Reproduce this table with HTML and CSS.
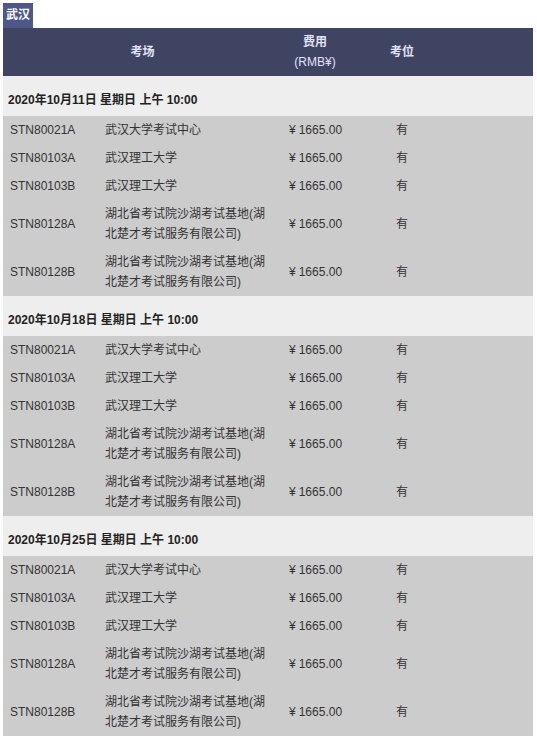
FILE: index.html
```html
<!DOCTYPE html>
<html lang="zh">
<head>
<meta charset="utf-8">
<link rel="stylesheet" href="styles.css">
</head>
<body>
<div class="wrap">
  <div class="city">武汉</div>
  <div class="head">
    <div class="h-venue">考场</div>
    <div class="h-fee">费用<br><span class="unit">(RMB¥)</span></div>
    <div class="h-seat">考位</div>
  </div>

  <div class="date">2020年10月11日 星期日 上午 10:00</div>
  <div class="rows">
    <div class="row"><div class="c1">STN80021A</div><div class="c2">武汉大学考试中心</div><div class="c3"><span class="yen">¥</span>1665.00</div><div class="c4">有</div></div>
    <div class="row"><div class="c1">STN80103A</div><div class="c2">武汉理工大学</div><div class="c3"><span class="yen">¥</span>1665.00</div><div class="c4">有</div></div>
    <div class="row"><div class="c1">STN80103B</div><div class="c2">武汉理工大学</div><div class="c3"><span class="yen">¥</span>1665.00</div><div class="c4">有</div></div>
    <div class="row"><div class="c1">STN80128A</div><div class="c2">湖北省考试院沙湖考试基地(湖北楚才考试服务有限公司)</div><div class="c3"><span class="yen">¥</span>1665.00</div><div class="c4">有</div></div>
    <div class="row"><div class="c1">STN80128B</div><div class="c2">湖北省考试院沙湖考试基地(湖北楚才考试服务有限公司)</div><div class="c3"><span class="yen">¥</span>1665.00</div><div class="c4">有</div></div>
  </div>

  <div class="date">2020年10月18日 星期日 上午 10:00</div>
  <div class="rows">
    <div class="row"><div class="c1">STN80021A</div><div class="c2">武汉大学考试中心</div><div class="c3"><span class="yen">¥</span>1665.00</div><div class="c4">有</div></div>
    <div class="row"><div class="c1">STN80103A</div><div class="c2">武汉理工大学</div><div class="c3"><span class="yen">¥</span>1665.00</div><div class="c4">有</div></div>
    <div class="row"><div class="c1">STN80103B</div><div class="c2">武汉理工大学</div><div class="c3"><span class="yen">¥</span>1665.00</div><div class="c4">有</div></div>
    <div class="row"><div class="c1">STN80128A</div><div class="c2">湖北省考试院沙湖考试基地(湖北楚才考试服务有限公司)</div><div class="c3"><span class="yen">¥</span>1665.00</div><div class="c4">有</div></div>
    <div class="row"><div class="c1">STN80128B</div><div class="c2">湖北省考试院沙湖考试基地(湖北楚才考试服务有限公司)</div><div class="c3"><span class="yen">¥</span>1665.00</div><div class="c4">有</div></div>
  </div>

  <div class="date">2020年10月25日 星期日 上午 10:00</div>
  <div class="rows">
    <div class="row"><div class="c1">STN80021A</div><div class="c2">武汉大学考试中心</div><div class="c3"><span class="yen">¥</span>1665.00</div><div class="c4">有</div></div>
    <div class="row"><div class="c1">STN80103A</div><div class="c2">武汉理工大学</div><div class="c3"><span class="yen">¥</span>1665.00</div><div class="c4">有</div></div>
    <div class="row"><div class="c1">STN80103B</div><div class="c2">武汉理工大学</div><div class="c3"><span class="yen">¥</span>1665.00</div><div class="c4">有</div></div>
    <div class="row"><div class="c1">STN80128A</div><div class="c2">湖北省考试院沙湖考试基地(湖北楚才考试服务有限公司)</div><div class="c3"><span class="yen">¥</span>1665.00</div><div class="c4">有</div></div>
    <div class="row"><div class="c1">STN80128B</div><div class="c2">湖北省考试院沙湖考试基地(湖北楚才考试服务有限公司)</div><div class="c3"><span class="yen">¥</span>1665.00</div><div class="c4">有</div></div>
  </div>
</div>
</body>
</html>
```

FILE: styles.css
```css
html, body {
  margin: 0;
  padding: 0;
  background: #ffffff;
}
body {
  font-family: "Liberation Sans", Arial, "Noto Sans CJK SC", sans-serif;
  font-size: 12px;
  line-height: 20px;
  color: #333333;
}
.wrap {
  width: 530px;
  margin-left: 3px;
  padding-top: 3px;
}
.city {
  display: inline-block;
  vertical-align: top;
  height: 25px;
  line-height: 25px;
  padding: 0 3px;
  background: #4e5788;
  color: #ffffff;
  font-weight: bold;
}
.head {
  display: grid;
  grid-template-columns: 279px 66px 108px 1fr;
  align-items: center;
  height: 48px;
  background: #404463;
  color: #e2e2fb;
  text-align: center;
  font-weight: bold;
}
.head .unit {
  font-weight: normal;
}
.date {
  height: 40px;
  box-sizing: border-box;
  padding: 14px 0 6px 5px;
  background: #eeeeee;
  font-weight: bold;
  color: #222222;
}
.rows {
  background: #cccccc;
}
.row {
  display: grid;
  grid-template-columns: 95px 184px 107px 1fr;
  align-items: center;
  padding: 4px 0;
}
.row > div {
  padding-left: 7px;
}
.row .c2 {
  padding-right: 12px;
}
.yen {
  margin-right: 3px;
}
```
